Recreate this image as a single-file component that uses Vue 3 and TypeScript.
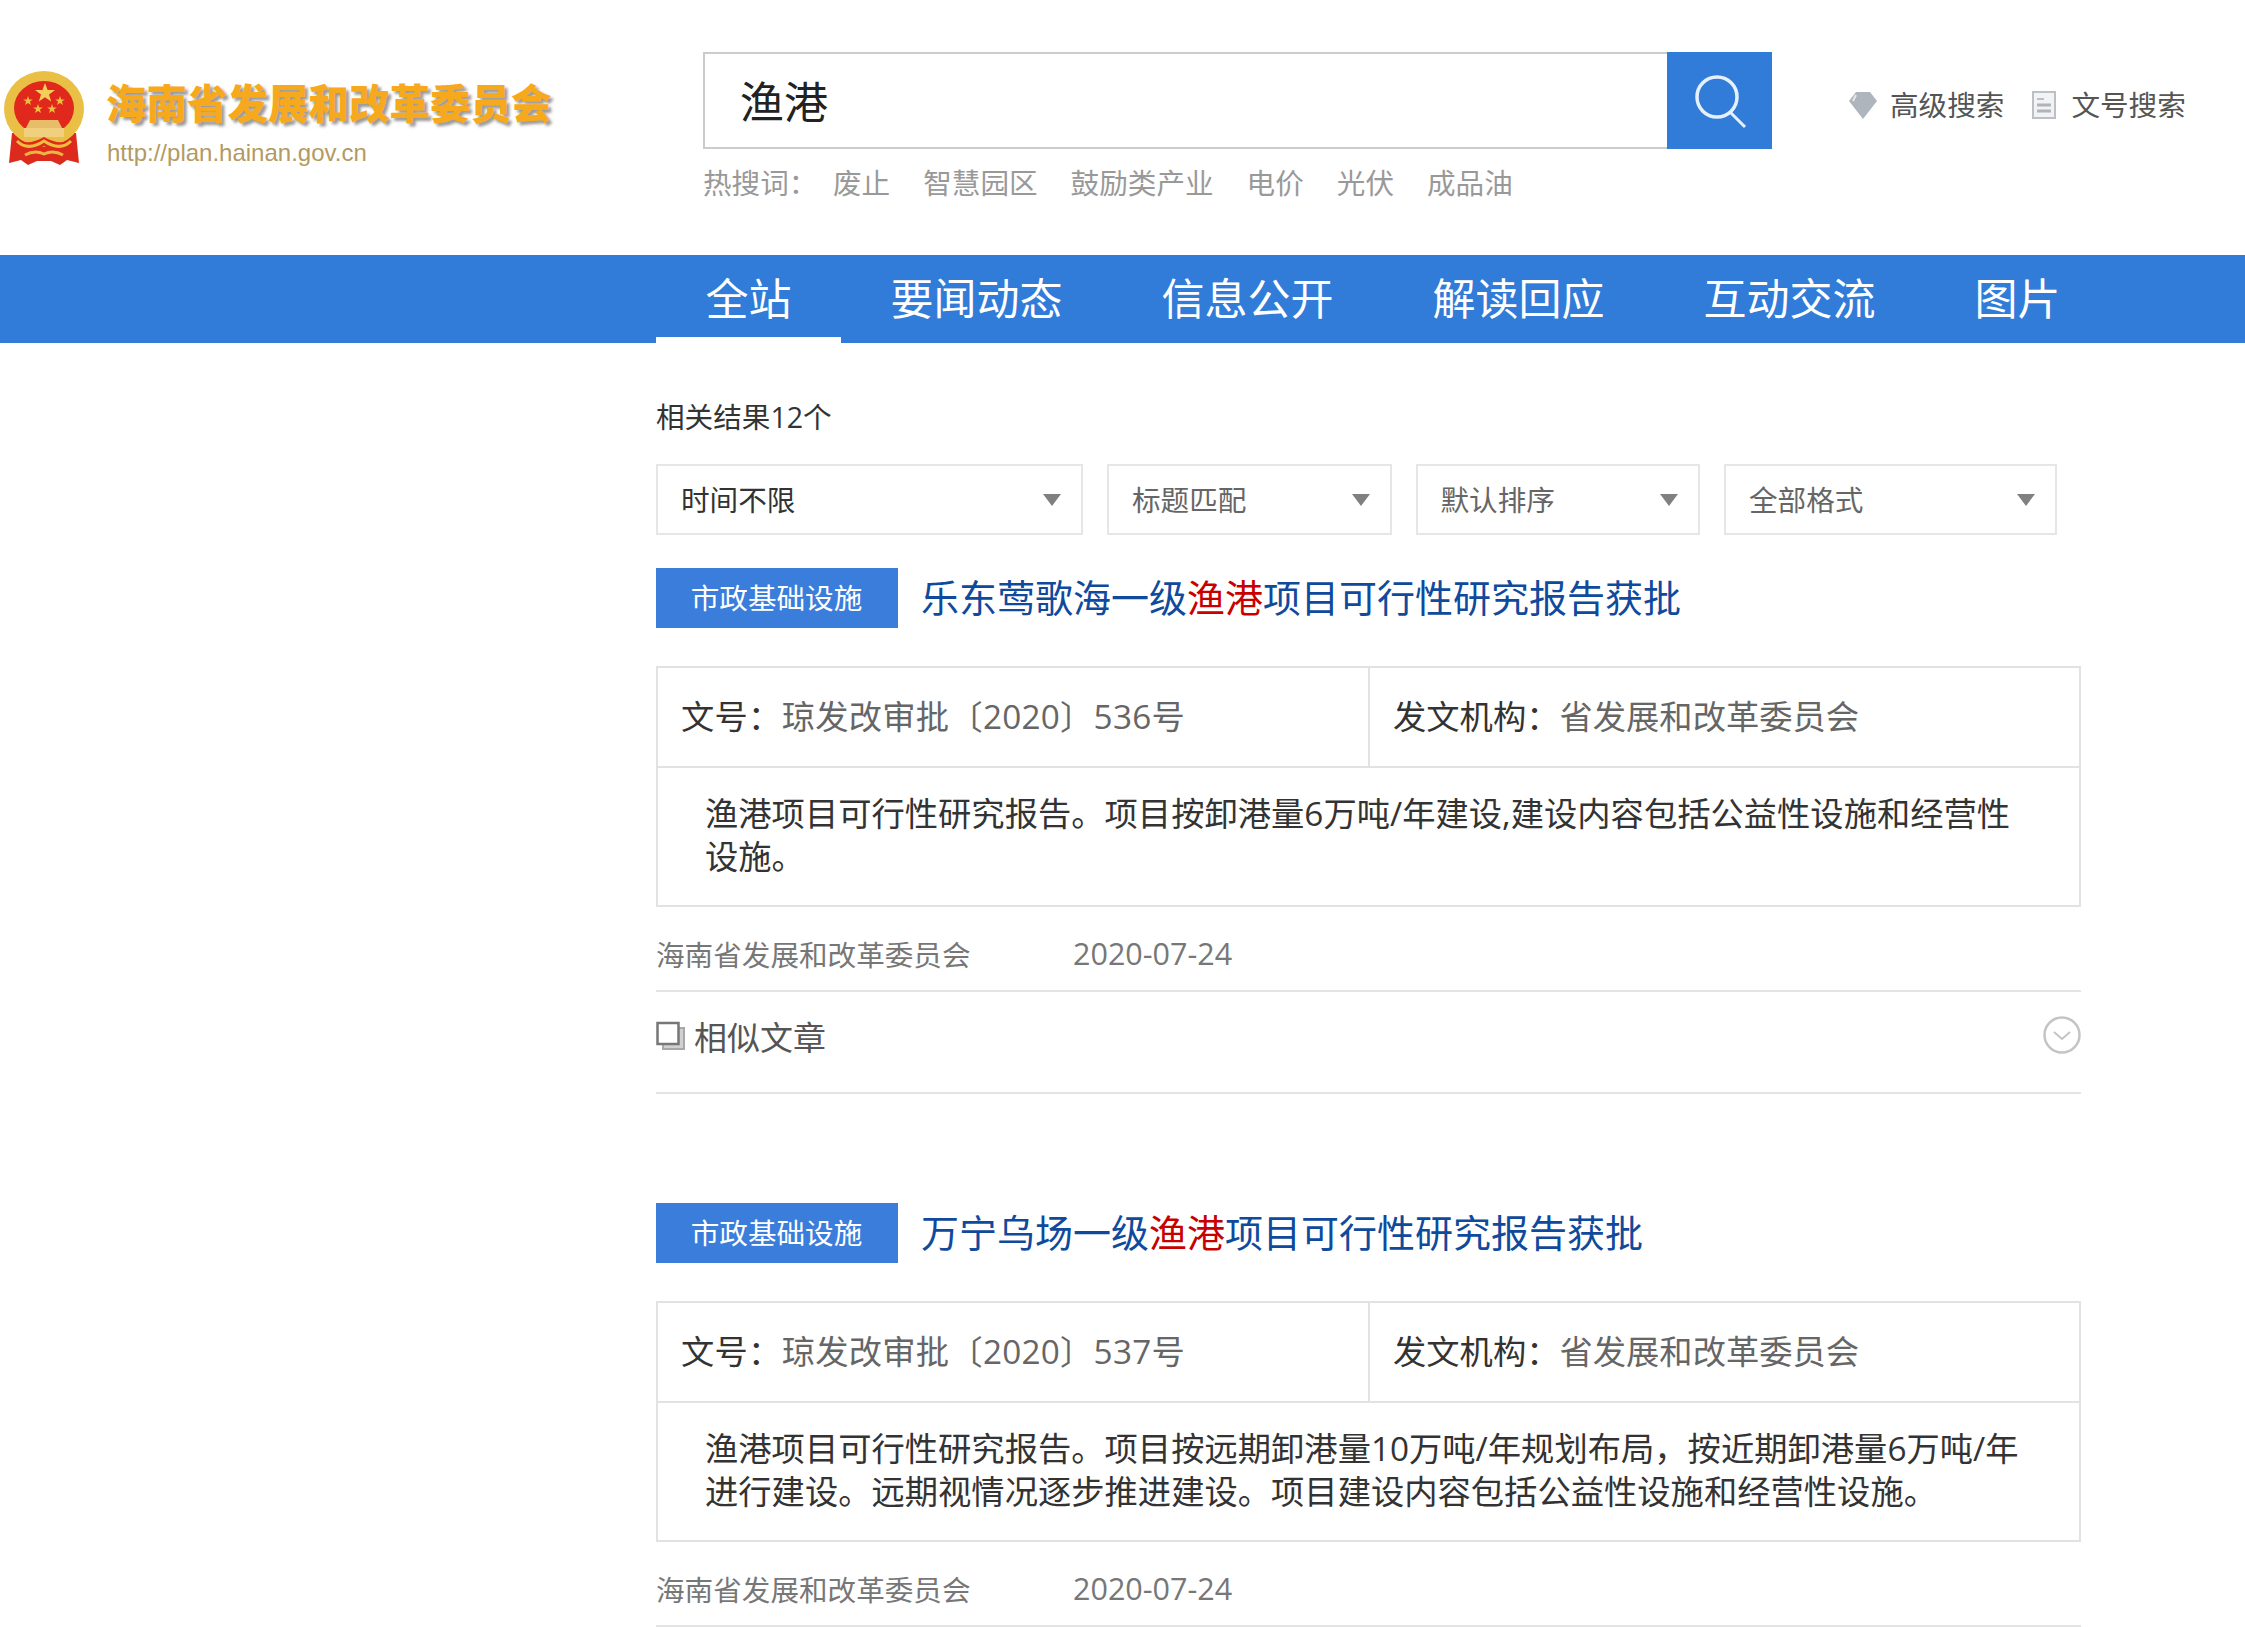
<script setup lang="ts">
interface Segment { text: string; hit?: boolean }
interface Result {
  tag: string
  title: Segment[]
  docNo: string
  org: string
  body: string
  source: string
  date: string
  similar: boolean
}

const navItems: string[] = ['全站', '要闻动态', '信息公开', '解读回应', '互动交流', '图片']
const hotWords: string[] = ['废止', '智慧园区', '鼓励类产业', '电价', '光伏', '成品油']
const filters = [
  { label: '时间不限', cls: 'w1 dark' },
  { label: '标题匹配', cls: 'w2' },
  { label: '默认排序', cls: 'w2' },
  { label: '全部格式', cls: 'w3' },
]
const results: Result[] = [
  {
    tag: '市政基础设施',
    title: [{ text: '乐东莺歌海一级' }, { text: '渔港', hit: true }, { text: '项目可行性研究报告获批' }],
    docNo: '琼发改审批〔2020〕536号',
    org: '省发展和改革委员会',
    body: '渔港项目可行性研究报告。项目按卸港量6万吨/年建设,建设内容包括公益性设施和经营性设施。',
    source: '海南省发展和改革委员会',
    date: '2020-07-24',
    similar: true,
  },
  {
    tag: '市政基础设施',
    title: [{ text: '万宁乌场一级' }, { text: '渔港', hit: true }, { text: '项目可行性研究报告获批' }],
    docNo: '琼发改审批〔2020〕537号',
    org: '省发展和改革委员会',
    body: '渔港项目可行性研究报告。项目按远期卸港量10万吨/年规划布局，按近期卸港量6万吨/年进行建设。远期视情况逐步推进建设。项目建设内容包括公益性设施和经营性设施。',
    source: '海南省发展和改革委员会',
    date: '2020-07-24',
    similar: false,
  },
]
</script>

<template>
  <div class="page">
    <header class="header">
      <div class="logo">
        <svg class="emblem" width="82" height="96" viewBox="0 0 82 96">
          <path d="M9 62L6 92l12-3 7 5 9-4h14l9 4 7-5 12 3-3-30z" fill="#dc2a1c" />
          <ellipse cx="41" cy="38" rx="40" ry="38" fill="#eabf45" />
          <ellipse cx="41" cy="37" rx="30" ry="27" fill="#e0281c" />
          <path d="M42 12l2.6 7h7.4l-6 4.4 2.2 7.2-6.2-4.4-6.2 4.4 2.2-7.2-6-4.4h7.4z" fill="#f3cf5a" />
          <path d="M25 25l1.2 3.4h3.6l-2.9 2.1 1.1 3.5-3-2.1-3 2.1 1.1-3.5-2.9-2.1h3.6z" fill="#eebf3e" />
          <path d="M57 25l1.2 3.4h3.6l-2.9 2.1 1.1 3.5-3-2.1-3 2.1 1.1-3.5-2.9-2.1h3.6z" fill="#eebf3e" />
          <path d="M35 33l1.2 3.4h3.6l-2.9 2.1 1.1 3.5-3-2.1-3 2.1 1.1-3.5-2.9-2.1h3.6z" fill="#eebf3e" />
          <path d="M49 33l1.2 3.4h3.6l-2.9 2.1 1.1 3.5-3-2.1-3 2.1 1.1-3.5-2.9-2.1h3.6z" fill="#eebf3e" />
          <path d="M27 49h28l4 8H23z" fill="#e7bd6a" />
          <path d="M21 57h40v9H21z" fill="#f0cf7e" />
          <path d="M13 66c7 8 17 6 28 0 11 6 21 8 28 0l1 10c-10 6-20 4-29-1-9 5-19 7-29 1z" fill="#e0281c" />
          <path d="M14 70c8 8 18 6 27 0 9 6 19 8 27 0" fill="none" stroke="#eebf3e" stroke-width="3" />
          <path d="M22 84c7-4 13-4 19-1 6-3 12-3 19 1" fill="none" stroke="#e9b93f" stroke-width="3" />
        </svg>
        <div class="logo-text">
          <div class="logo-name">海南省发展和改革委员会</div>
          <div class="logo-url">http://plan.hainan.gov.cn</div>
        </div>
      </div>
      <div class="search-col">
        <div class="search-box">
          <div class="search-input">渔港</div>
          <div class="search-btn">
            <svg width="56" height="56" viewBox="0 0 56 56" fill="none" stroke="#e6f0fc">
              <circle cx="25" cy="24" r="20" stroke-width="3.5" />
              <path d="M38 39l15 15" stroke-width="3" />
            </svg>
          </div>
        </div>
        <div class="hot">
          <span class="hot-label">热搜词：</span>
          <span v-for="w in hotWords" :key="w" class="hot-word">{{ w }}</span>
        </div>
      </div>
      <div class="links">
        <span class="link">
          <svg width="30" height="30" viewBox="0 0 30 30">
            <path d="M8 2h14l7 9-14 18L1 11z" fill="#aeb5bd" />
            <path d="M8 5l-3 6" stroke="#e6e9ec" stroke-width="2" />
          </svg>
          高级搜索
        </span>
        <span class="link second">
          <svg width="24" height="28" viewBox="0 0 24 28">
            <rect x="1" y="1" width="22" height="26" fill="#f2f3f4" stroke="#bcc0c4" stroke-width="2" />
            <path d="M5 8h7" stroke="#bcc0c4" stroke-width="2" />
            <path d="M5 14h14M5 20h14" stroke="#b0b4b8" stroke-width="3" />
          </svg>
          文号搜索
        </span>
      </div>
    </header>

    <nav class="nav">
      <a v-for="(n, i) in navItems" :key="n" class="nav-item" :class="{ active: i === 0 }">{{ n }}</a>
    </nav>

    <main class="main">
      <div class="count">相关结果12个</div>
      <div class="filters">
        <div v-for="f in filters" :key="f.label" class="select" :class="f.cls">
          <span>{{ f.label }}</span>
          <i class="caret"></i>
        </div>
      </div>

      <article v-for="(r, idx) in results" :key="idx" class="result">
        <div class="title-row">
          <span class="tag">{{ r.tag }}</span>
          <h3 class="title">
            <span v-for="(s, j) in r.title" :key="j" :class="{ hit: s.hit }">{{ s.text }}</span>
          </h3>
        </div>
        <div class="table">
          <div class="table-head">
            <div class="cell left"><b>文号：</b>{{ r.docNo }}</div>
            <div class="cell"><b>发文机构：</b>{{ r.org }}</div>
          </div>
          <p class="body">{{ r.body }}</p>
        </div>
        <div class="meta">
          <span class="source">{{ r.source }}</span>
          <span class="date">{{ r.date }}</span>
        </div>
        <div v-if="r.similar" class="similar">
          <svg width="30" height="30" viewBox="0 0 30 30" fill="none">
            <rect x="7" y="7" width="21" height="21" fill="#d0d0d0" stroke="#a8a8a8" stroke-width="2" />
            <rect x="1.5" y="2" width="21" height="21" fill="#fff" stroke="#777" stroke-width="2.5" />
          </svg>
          <span>相似文章</span>
          <svg class="chev" width="38" height="38" viewBox="0 0 38 38" fill="none" stroke="#c4c4c4">
            <circle cx="19" cy="19" r="17.5" stroke-width="2.5" />
            <path d="M11 16l8 7 8-7" stroke-width="2" />
          </svg>
        </div>
      </article>
    </main>
  </div>
</template>

<style>
html, body { background: #fff; }
</style>

<style scoped>
.page {
  width: 2245px;
  height: 1627px;
  overflow: hidden;
  background: #fff;
  font-family: "Open Sans", "Noto Sans CJK SC", sans-serif;
  color: #333;
}
.header {
  display: flex;
  height: 255px;
  box-sizing: border-box;
}
.logo {
  width: 703px;
  flex: none;
  display: flex;
  padding: 71px 0 0 3px;
  box-sizing: border-box;
}
.emblem { filter: blur(0.6px); }
.logo-text { margin-left: 21px; }
.logo-name {
  font-size: 40.5px;
  font-weight: 900;
  line-height: 62px;
  color: #f7a91d;
  text-shadow: 3px 3px 3px #9a9a9a;
  white-space: nowrap;
  font-family: "Noto Sans CJK SC", sans-serif;
}
.logo-url {
  font-family: "Liberation Sans", sans-serif;
  font-size: 24px;
  line-height: 30px;
  color: #b39a62;
  margin-top: 5px;
  padding-left: 1px;
}
.search-col { width: 1069px; flex: none; padding-top: 52px; }
.search-box { display: flex; height: 97px; }
.search-input {
  flex: 1;
  border: 2px solid #ccc;
  border-right: 0;
  padding-left: 35px;
  font-size: 44px;
  line-height: 96px;
  color: #222;
}
.search-btn {
  width: 105px;
  background: #317bd9;
  display: flex;
  align-items: center;
  justify-content: center;
}
.hot {
  display: flex;
  margin-top: 14px;
  font-size: 28.6px;
  line-height: 40px;
  color: #999;
}
.hot-label { width: 130px; flex: none; }
.hot-word { margin-right: 33px; }
.links {
  margin-left: 76px;
  padding-top: 84px;
  display: flex;
  align-items: flex-start;
  font-size: 28.6px;
  line-height: 42px;
  color: #555;
  white-space: nowrap;
}
.link { display: flex; align-items: center; }
.link svg { margin-right: 12px; }
.link.second { margin-left: 28px; }
.link.second svg { margin-right: 15px; }
.nav {
  height: 88px;
  background: #317bd9;
  display: flex;
  padding-left: 656px;
}
.nav-item {
  padding: 0 49.5px;
  font-size: 43px;
  line-height: 87px;
  height: 88px;
  box-sizing: border-box;
  color: #fff;
}
.nav-item.active { border-bottom: 6px solid #fff; }
.main { padding-left: 656px; width: 1425px; }
.count {
  margin-top: 54px;
  font-size: 28.6px;
  line-height: 40px;
  height: 40px;
  color: #333;
}
.filters { display: flex; gap: 24px; margin-top: 27px; }
.select {
  height: 71px;
  box-sizing: border-box;
  border: 2px solid #e6e6e6;
  padding: 0 20px 3px 23px;
  display: flex;
  align-items: center;
  justify-content: space-between;
  font-size: 28.6px;
  color: #666;
}
.select.dark { color: #333; }
.w1 { width: 427px; }
.w2 { width: 284.5px; }
.w3 { width: 333px; }
.caret {
  width: 0;
  height: 0;
  margin-top: 3px;
  border-left: 9.5px solid transparent;
  border-right: 9.5px solid transparent;
  border-top: 12px solid #808080;
}
.result { margin-top: 33px; }
.result + .result { margin-top: 109px; }
.title-row { display: flex; align-items: center; height: 60px; }
.tag {
  width: 242px;
  height: 60px;
  line-height: 60px;
  background: #3b7ddb;
  color: #fff;
  font-size: 28.6px;
  text-align: center;
  flex: none;
  padding-right: 1px;
  box-sizing: border-box;
}
.title {
  margin: 0 0 0 23px;
  font-size: 38px;
  font-weight: 400;
  line-height: 58px;
  height: 60px;
  color: #0f4a9c;
  white-space: nowrap;
}
.hit { color: #c80000; }
.table {
  margin-top: 38px;
  border: 2px solid #e2e2e2;
  height: 241px;
  box-sizing: border-box;
}
.table-head { display: flex; height: 98px; border-bottom: 2px solid #e2e2e2; }
.cell {
  flex: 1;
  padding-left: 23px;
  font-size: 33.3px;
  line-height: 96px;
  color: #666;
  white-space: nowrap;
}
.cell.left {
  flex: none;
  width: 712px;
  box-sizing: border-box;
  border-right: 2px solid #e2e2e2;
  letter-spacing: 0.25px;
}
.cell b { font-weight: 400; color: #333; }
.body {
  margin: 0;
  padding: 24px 50px 0 47px;
  font-size: 33.3px;
  line-height: 43px;
  color: #333;
}
.meta {
  display: flex;
  height: 82px;
  box-sizing: content-box;
  align-items: center;
  padding-top: 1px;
  border-bottom: 2px solid #e4e4e4;
  font-size: 28.6px;
  color: #777;
}
.meta span { position: relative; top: 4px; }
.source { width: 417px; flex: none; }
.date { font-size: 30.5px; }
.similar {
  display: flex;
  align-items: center;
  height: 102px;
  padding-bottom: 12px;
  box-sizing: border-box;
  border-bottom: 2px solid #e4e4e4;
  position: relative;
  font-size: 33px;
  color: #555;
}
.similar span { margin-left: 8px; }
.chev { position: absolute; right: 0; top: 24px; }
</style>
